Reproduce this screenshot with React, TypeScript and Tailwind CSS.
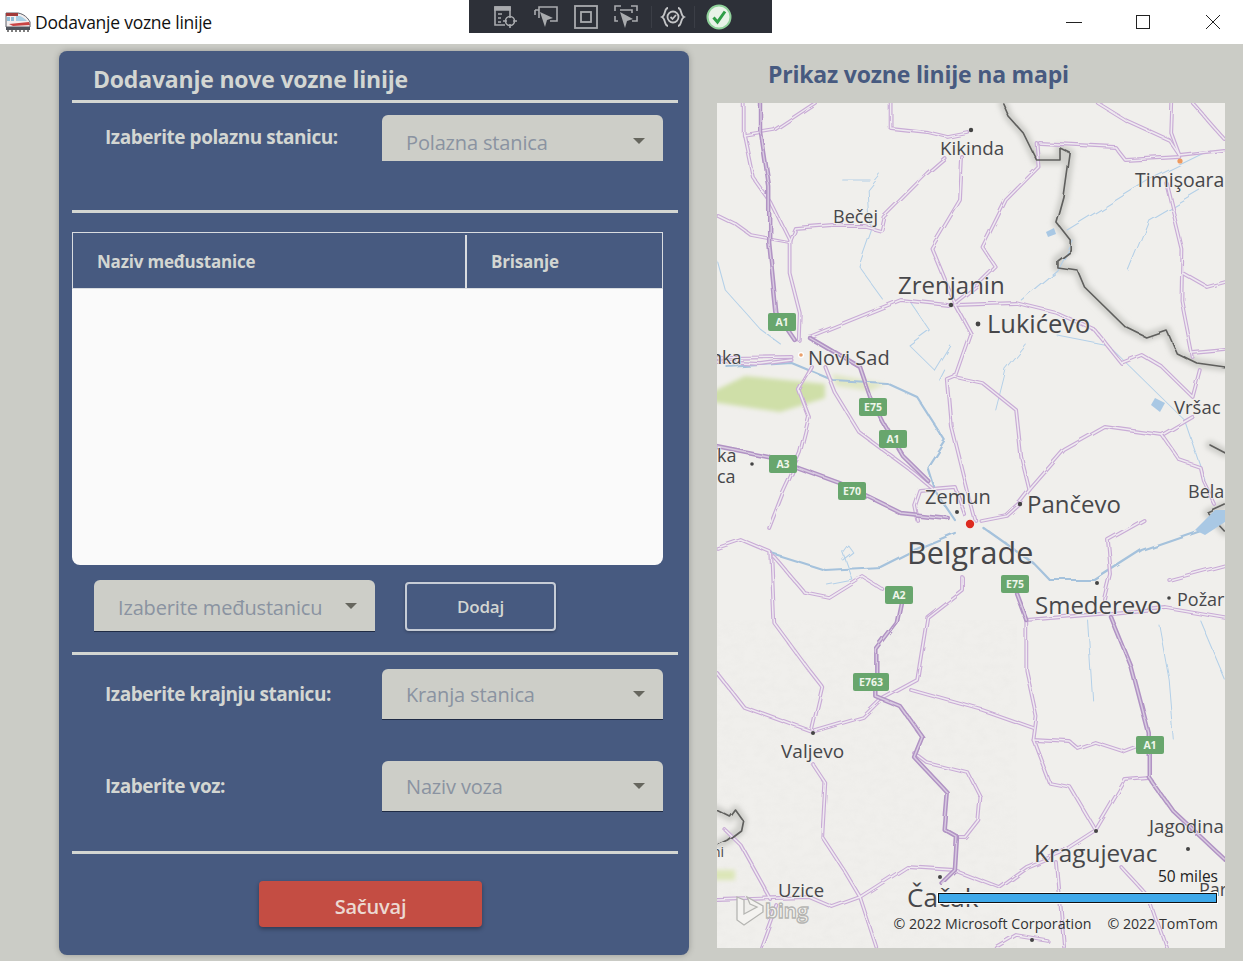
import React from "react";

type P = string;

const roads: P[] = [
  "743,103 743,133 752,177 770,203 788,240 788,273 798,313 797,340",
  "717,215 735,224 750,235 787,242 793,228 830,225",
  "743,135 773,130 813,103",
  "887,103 887,128 923,132 943,137 963,133",
  "957,157 955,200 927,248 940,280 950,303",
  "940,158 923,173 880,217 877,230 862,226 830,226",
  "807,337 897,300 943,305",
  "950,305 1010,303 1050,313 1087,330 1113,363 1133,355 1153,367 1183,397 1190,370",
  "950,305 965,333 950,377 943,380 947,427 963,493 970,520",
  "950,377 977,383 1010,410 1015,457 1023,490 1013,503",
  "1023,490 1057,450 1097,427 1153,435 1183,417",
  "1153,435 1170,460 1190,467 1193,480 1205,505",
  "717,358 790,357",
  "717,362 760,364 790,360",
  "810,367 797,390 807,417 798,453 780,493 767,527",
  "823,367 833,393 857,433 910,473 930,490",
  "1090,103 1117,120 1160,140 1170,155 1213,150",
  "1033,143 1107,147 1117,160 1170,157",
  "1163,103 1162,133 1170,155",
  "1183,103 1213,138",
  "1157,183 1173,250 1172,300 1183,357",
  "1173,273 1197,287 1215,282",
  "1183,353 1215,350",
  "1030,143 1032,167 1000,200 977,247 990,267 970,287 950,303",
  "913,520 910,505 915,490 950,487 960,515",
  "1013,503 1000,515 975,520",
  "717,548 740,540 770,553 773,623 807,670 820,687 810,730",
  "773,557 803,593 827,598 860,577 880,590",
  "957,577 957,590 923,617 913,680 877,700",
  "717,673 743,707 810,732 860,717 877,700",
  "907,690 977,710 1027,728",
  "1020,620 1020,670 1030,717 1027,740 1043,783 1063,787 1088,830",
  "1020,620 1103,613 1157,608 1215,618",
  "1027,740 1063,742 1070,748 1087,742 1117,752 1130,747",
  "1140,778 1117,780 1088,830 1053,853 1020,867 993,887 950,870 903,867 857,897 830,907 807,897 717,900",
  "910,753 923,763 963,773 975,797 973,820 960,837 952,837",
  "810,763 823,783 820,837 843,873 857,897 873,947",
  "1050,863 1057,947",
  "1113,867 1140,897 1157,947",
  "1135,520 1100,540 1103,575 1097,600",
  "1160,580 1215,565",
  "760,947 775,905",
  "770,900 740,845 725,830",
  "990,947 1010,935 1040,940",
];

const highways: P[] = [
  "760,103 760,133 768,187 768,243 775,313 793,340",
  "807,337 857,367 867,397 880,423 900,457 923,480",
  "717,447 767,457 837,483 897,513 943,518",
  "897,603 893,623 873,650 873,697 897,707 918,737 910,757 943,793 940,830 952,837 950,870 937,883",
  "1010,593 1020,620",
  "1103,617 1123,667 1140,733 1140,777 1163,810 1215,860",
];

const rivers: P[] = [
  "727,367 790,363 830,380 883,383 913,397 940,440 923,467 930,490 950,520",
  "977,527 1027,563 1043,580 1087,580 1133,550 1190,530 1213,518",
  "770,553 823,570 877,567 910,550 950,533",
  "840,560 850,552 845,545 840,552 850,580 825,585",
  "877,175 865,190 867,230 855,265 880,300",
  "840,180 867,180",
  "717,260 725,290 760,330 780,345",
  "905,300 925,330 905,345 930,370 945,345",
  "990,410 1000,370 1020,345",
  "935,380 940,370",
  "1060,230 1140,180 1200,150",
  "1015,300 1050,270 1065,240",
  "1120,270 1140,220 1190,190",
  "1050,335 1100,345 1175,420",
  "1175,420 1195,480",
  "1080,620 1085,700",
  "1150,625 1160,680 1165,740",
  "1190,620 1215,680",
];

const border: P[] = [
  "997,103 1003,117 1017,133 1030,160 1053,160 1053,148 1063,153 1057,197 1050,223 1063,240 1063,250 1050,260 1050,267 1070,270 1077,287 1097,307 1117,327 1137,337 1157,330 1167,353 1187,363 1215,367",
  "1200,445 1215,453",
  "1215,505 1198,513 1215,532",
  "710,807 730,817 735,810 742,820 740,830 727,840 717,845",
];

const labels: [string, number, number, number][] = [
  ["Kikinda", 940, 155, 18.8],
  ["Timişoara", 1135, 187, 19.5],
  ["Bečej", 833, 223, 18],
  ["Zrenjanin", 898, 294, 24],
  ["Lukićevo", 987, 333, 25.5],
  ["Novi Sad", 808, 365, 20],
  ["nka", 711, 364, 18],
  ["Vršac", 1174, 414, 18.5],
  ["ka", 717, 462, 18],
  ["ca", 717, 483, 18],
  ["Zemun", 925, 504, 20],
  ["Pančevo", 1027, 513, 24],
  ["Bela", 1188, 498, 18],
  ["Belgrade", 907, 564, 30.5],
  ["Smederevo", 1035, 614, 24],
  ["Požar", 1177, 606, 18],
  ["Valjevo", 781, 758, 19],
  ["Jagodina", 1149, 833, 18.7],
  ["Kragujevac", 1034, 862, 24.3],
  ["ni", 712, 857, 14],
  ["Uzice", 778, 897, 18.5],
  ["Čačak", 907, 907, 26],
  ["Par", 1199, 896, 18],
];

const shields: [string, number, number, number][] = [
  ["A1", 782, 322, 28],
  ["E75", 873, 407, 28],
  ["A1", 893, 439, 28],
  ["A3", 783, 464, 28],
  ["E70", 852, 491, 28],
  ["A2", 899, 595, 28],
  ["E75", 1015, 584, 28],
  ["E763", 871, 682, 36],
  ["A1", 1150, 745, 28],
];

const dots: [number, number, number][] = [
  [971, 130, 2.2],
  [951, 305, 2.2],
  [978, 324, 2.4],
  [752, 464, 1.8],
  [957, 512, 2],
  [1020, 504, 2.2],
  [1097, 583, 2],
  [1169, 598, 1.8],
  [813, 733, 2],
  [1096, 831, 2],
  [1188, 849, 2],
  [940, 877, 2],
  [1032, 940, 2],
];

function MapDrawing() {
  return (
    <svg viewBox="717 103 508 845" className="block h-full w-full">
      <defs>
        <filter id="wiggle" filterUnits="userSpaceOnUse" x="700" y="90" width="540" height="870">
          <feTurbulence type="fractalNoise" baseFrequency="0.045" numOctaves="1" seed="4" />
          <feDisplacementMap in="SourceGraphic" scale="7" />
          <feGaussianBlur stdDeviation="0.3" />
        </filter>
        <filter id="blur">
          <feGaussianBlur stdDeviation="2.2" />
        </filter>
        <filter id="halo" filterUnits="userSpaceOnUse" x="700" y="90" width="540" height="870">
          <feGaussianBlur stdDeviation="2.5" />
        </filter>
        <filter id="terrain" filterUnits="userSpaceOnUse" x="717" y="620" width="300" height="328">
          <feTurbulence type="fractalNoise" baseFrequency="0.09 0.14" numOctaves="3" seed="8" />
          <feColorMatrix values="0 0 0 0 0.55  0 0 0 0 0.55  0 0 0 0 0.52  0.5 0 0 0 -0.17" />
        </filter>
      </defs>
      <rect x="717" y="103" width="508" height="845" fill="#f0efec" />
      <rect x="717" y="620" width="300" height="328" filter="url(#terrain)" opacity="0.22" />
      <g filter="url(#blur)" fill="#cfdfa8">
        <polygon points="712,392 745,376 825,384 825,398 780,412 712,402" />
        <polygon points="832,374 885,384 870,391 836,386" fill="#dfe6c4" />
        <polygon points="712,870 735,870 735,880 712,880" fill="#dce6b8" />
      </g>
      <g transform="translate(710 0) scale(1.0204 1) translate(-710 0)" fill="none" strokeLinejoin="round" strokeLinecap="round">
        <g filter="url(#halo)" stroke="#cfcfcb" strokeWidth="9">
          {border.map((b) => (
            <polyline key={b} points={b} />
          ))}
        </g>
        <g filter="url(#wiggle)">
          {rivers.map((r, i) => (
            <polyline key={r} points={r} stroke={i < 3 ? "#a5c2dc" : "#b4d0e8"} strokeWidth={i < 3 ? 2.2 : 1} />
          ))}
          {roads.map((r) => (
            <polyline key={r} points={r} stroke="#c9acd6" strokeWidth="3.8" />
          ))}
          {roads.map((r) => (
            <polyline key={r} points={r} stroke="#efeaf0" strokeWidth="1.5" />
          ))}
          {highways.map((r) => (
            <polyline key={r} points={r} stroke="#b193c4" strokeWidth="4.4" />
          ))}
          {highways.map((r) => (
            <polyline key={r} points={r} stroke="#d9cbe1" strokeWidth="1.4" />
          ))}
          {border.map((b) => (
            <polyline key={b} points={b} stroke="#5f5f5d" strokeWidth="1.6" />
          ))}
        </g>
      </g>
      <polygon points="1155,398 1165,403 1160,412 1151,405" fill="#a9c8e4" />
      <polygon points="1046,232 1054,228 1056,234 1048,237" fill="#a9c8e4" />
      <polygon points="1195,530 1215,510 1225,510 1225,522 1205,535" fill="#a9c8e4" />
      {dots.map(([x, y, r]) => (
        <circle key={`${x}-${y}`} cx={x} cy={y} r={r} fill="#444" />
      ))}
      <circle cx="801" cy="355" r="3" fill="#fff" />
      <circle cx="801" cy="355" r="1.8" fill="#e9a06c" />
      <circle cx="1180" cy="161" r="2.6" fill="#ef9a5f" />
      <circle cx="970" cy="524" r="5" fill="#f4f0ee" />
      <circle cx="970" cy="524" r="4.2" fill="#dd2b20" />
      <g className="font-['Open_Sans',sans-serif]" fill="#47474a">
        {labels.map(([t, x, y, s]) => (
          <text key={t} x={x} y={y} fontSize={s} stroke="#f0efec" strokeWidth="1.4" paintOrder="stroke">
            {t}
          </text>
        ))}
      </g>
      <g className="font-['Open_Sans',sans-serif]">
        {shields.map(([t, x, y, w], i) => (
          <g key={`${t}${i}`}>
            <rect x={x - w / 2} y={y - 9} width={w} height="18" rx="2" fill="#68a66d" />
            <text x={x} y={y + 4} fontSize="10.5" fontWeight="700" textAnchor="middle" fill="#eef5ea">
              {t}
            </text>
          </g>
        ))}
      </g>
      <g fill="#f4f3f0" stroke="#b5b5b2" strokeWidth="1.3">
        <path d="M737 897 L744 900 L744 914 L757 907 L750 904 L747 897 L763 906 L763 912 L744 925 L737 920 Z" />
        <text x="765" y="918" fontSize="20" fontWeight="700" className="font-['Open_Sans',sans-serif]">
          bing
        </text>
      </g>
    </svg>
  );
}

function Caret() {
  return <span className="h-0 w-0 border-x-[6px] border-t-[6px] border-x-transparent border-t-[#66665e]" />;
}

function Picker({ label, extra, textClass }: { label: string; extra: string; textClass: string }) {
  return (
    <div className={`flex w-[281px] items-center justify-between rounded-t-md bg-[#cdcec8] pl-[24px] pr-[18px] text-[20px] tracking-[-0.15px] text-[#8a93a1] ${extra}`}>
      <span className={textClass}>{label}</span>
      <Caret />
    </div>
  );
}

function Divider() {
  return <div className="h-[3px] w-[606px] bg-[#d3d6d2]" />;
}

function FieldLabel({ children }: { children: React.ReactNode }) {
  return <span className="text-[19px] font-bold tracking-[-0.45px] text-[#d3d6d2]">{children}</span>;
}

function TrainIcon() {
  return (
    <svg viewBox="0 0 26 20" className="h-[20px] w-[26px]">
      <path d="M1 1 H13 C19 2 23 6 25 10 V15 H1 Z" fill="#f3eeee" stroke="#5c5f68" strokeWidth="1" />
      <rect x="1" y="1" width="12" height="3" fill="#a23a3a" />
      <rect x="2" y="5" width="3" height="4" fill="#8fbcd6" />
      <rect x="6" y="5" width="3" height="4" fill="#8fbcd6" />
      <path d="M11 4 H15 C18 5 20 7 22 9 H11 Z" fill="#a9cfe4" />
      <path d="M4 12 L24 10 L25 13 L8 14 Z" fill="#c94444" />
      <rect x="1" y="15" width="24" height="3" fill="#4f545c" />
      <path d="M2 19 H4 M6 19 H8 M10 19 H12 M14 19 H16 M18 19 H20 M22 19 H24" stroke="#555" strokeWidth="1.4" />
    </svg>
  );
}

function ToolIcons() {
  return (
    <div className="absolute left-[469px] top-0 flex h-[33px] w-[303px] items-center bg-[#2d3038] pl-[24px]">
      <svg viewBox="0 0 26 26" className="h-[26px] w-[26px]" fill="none" stroke="#a9abae" strokeWidth="1.6">
        <path d="M12 21 H2 V3 H17 V10" />
        <path d="M2 3 H17 V6 H2 Z" fill="#a9abae" />
        <path d="M5 10 H9 M5 14 H8 M5 18 H8" />
        <circle cx="17" cy="17" r="4.5" />
        <path d="M17 10 V14 M17 20 V24 M10 17 H14 M20 17 H24" />
      </svg>
      <svg viewBox="0 0 26 26" className="ml-[14px] h-[26px] w-[26px]" fill="none" stroke="#a9abae" strokeWidth="1.6">
        <path d="M6 14 V3 H24 V17 H17" />
        <path d="M2 6 H6 M2 6 V11" />
        <path d="M7 8 L20 14 L14 16 L12 23 Z" fill="#a9abae" stroke="none" />
      </svg>
      <svg viewBox="0 0 26 26" className="ml-[14px] h-[26px] w-[26px]" fill="none" stroke="#a9abae" strokeWidth="1.8">
        <rect x="2" y="2" width="22" height="22" />
        <rect x="8" y="8" width="10" height="10" />
      </svg>
      <svg viewBox="0 0 26 26" className="ml-[14px] h-[26px] w-[26px]" fill="none" stroke="#a9abae" strokeWidth="1.6">
        <path d="M2 7 V2 H8 M18 2 H24 V7 M24 12 V17 H19 M2 12 V17 H5" />
        <path d="M7 6 H19 V9" />
        <path d="M7 8 L20 15 L14 17 L12 24 Z" fill="#a9abae" stroke="none" />
      </svg>
      <span className="ml-[12px] h-[22px] w-px bg-[#3b3e46]" />
      <svg viewBox="0 0 26 26" className="ml-[8px] h-[26px] w-[26px]" fill="none" stroke="#c4c5c7" strokeWidth="1.8">
        <path d="M8 4 C4 4 6 11 2 13 C6 15 4 22 8 22" />
        <path d="M18 4 C22 4 20 11 24 13 C20 15 22 22 18 22" />
        <circle cx="13" cy="13" r="5.5" />
        <path d="M10.5 13 L12.5 15 L16 11" />
      </svg>
      <span className="ml-[8px] h-[22px] w-px bg-[#3b3e46]" />
      <svg viewBox="0 0 26 26" className="ml-[11px] h-[26px] w-[26px]">
        <circle cx="13" cy="13" r="11.5" fill="#e8f3e8" stroke="#8fd19a" strokeWidth="2" />
        <path d="M7.5 13.5 L11.5 18 L19 7.5" fill="none" stroke="#2f9e47" strokeWidth="3" />
      </svg>
    </div>
  );
}

function WindowButtons() {
  return (
    <div className="ml-auto flex h-full items-center">
      <span className="mr-[54px] h-px w-[16px] bg-[#222]" />
      <span className="mr-[55px] h-[14px] w-[14px] border border-[#222]" />
      <svg viewBox="0 0 16 16" className="mr-[22px] h-[16px] w-[16px]" stroke="#222" strokeWidth="1">
        <path d="M1 1 L15 15 M15 1 L1 15" />
      </svg>
    </div>
  );
}

export default function App() {
  return (
    <div className="relative flex h-[961px] w-[1243px] flex-col overflow-hidden bg-[#cbccc6] font-['Open_Sans',sans-serif]">
      <header className="flex h-[44px] shrink-0 items-center bg-white pl-[5px]">
        <TrainIcon />
        <span className="ml-[4px] text-[17.5px] tracking-[-0.25px] text-[#111]">Dodavanje vozne linije</span>
        <WindowButtons />
      </header>
      <ToolIcons />
      <main className="flex">
        <section className="ml-[59px] mt-[7px] h-[904px] w-[630px] rounded-lg bg-[#475a80] pl-[13px] shadow-[0_0_6px_rgba(0,0,0,0.25)]">
          <h1 className="flex h-[49px] items-center pl-[21px] pt-[7px] text-[23px] font-bold tracking-[-0.2px] text-[#d3d6d2]">
            Dodavanje nove vozne linije
          </h1>
          <Divider />
          <div className="flex h-[107px] items-start justify-between pl-[33px] pr-[26px] pt-[12px]">
            <div className="pt-[8px]">
              <FieldLabel>Izaberite polaznu stanicu:</FieldLabel>
            </div>
            <Picker label="Polazna stanica" extra="h-[46px] pt-[5px]" textClass="pt-[5px]" />
          </div>
          <Divider />
          <div className="mt-[19px] flex h-[333px] w-[591px] flex-col">
            <div className="flex h-[57px] border border-[#d9dce0] pt-[2px] text-[17px] font-bold tracking-[-0.2px] text-[#d3d6d2]">
              <div className="flex w-[394px] items-center border-r-2 border-[#d9dce0] pl-[24px]">Naziv međustanice</div>
              <div className="flex flex-1 items-center pl-[24px]">Brisanje</div>
            </div>
            <div className="flex-1 rounded-b-lg bg-[#fafafa]" />
          </div>
          <div className="mt-[15px] flex items-start pl-[22px]">
            <Picker label="Izaberite međustanicu" extra="h-[52px] border-b border-[#1f2b45]" textClass="pt-[5px]" />
            <button className="ml-[30px] mt-[2px] h-[49px] w-[151px] rounded border-2 border-[#c6ccd6] text-[17px] font-semibold tracking-[-0.2px] text-[#d3d6d2] shadow-[0_1px_3px_rgba(0,0,0,0.3)]">
              Dodaj
            </button>
          </div>
          <div className="mt-[20px]">
            <Divider />
          </div>
          <div className="mt-[14px] flex items-center justify-between pl-[33px] pr-[26px]">
            <FieldLabel>Izaberite krajnju stanicu:</FieldLabel>
            <Picker label="Kranja stanica" extra="h-[51px] border-b border-[#1f2b45]" textClass="pt-[1px]" />
          </div>
          <div className="mt-[41px] flex items-center justify-between pl-[33px] pr-[26px]">
            <FieldLabel>Izaberite voz:</FieldLabel>
            <Picker label="Naziv voza" extra="h-[51px] border-b border-[#1f2b45]" textClass="pt-[1px]" />
          </div>
          <div className="mt-[39px]">
            <Divider />
          </div>
          <button className="ml-[187px] mt-[27px] block h-[46px] w-[223px] rounded-sm bg-[#c44d43] pt-[5px] text-[20px] font-semibold tracking-[-0.2px] text-[#ecd9d2] shadow-[0_2px_4px_rgba(0,0,0,0.35)]">
            Sačuvaj
          </button>
        </section>
        <section className="ml-[28px] w-[508px]">
          <h2 className="flex h-[59px] items-center pl-[51px] pt-[2px] text-[23px] font-bold tracking-[-0.2px] text-[#475a80]">
            Prikaz vozne linije na mapi
          </h2>
          <div className="relative h-[845px] w-[508px] overflow-hidden">
            <MapDrawing />
            <div className="absolute right-[7px] top-[763px] text-[15.5px] leading-5 text-[#222]">50 miles</div>
            <div className="absolute left-[221px] top-[790px] h-[10px] w-[279px] border-[1.5px] border-[#111] bg-[#3fa9ea] outline outline-1 outline-white" />
            <div className="absolute right-[7px] top-[811px] flex gap-[16px] text-[14.2px] leading-5 text-[#333]">
              <span>© 2022 Microsoft Corporation</span>
              <span>© 2022 TomTom</span>
            </div>
          </div>
        </section>
      </main>
    </div>
  );
}
